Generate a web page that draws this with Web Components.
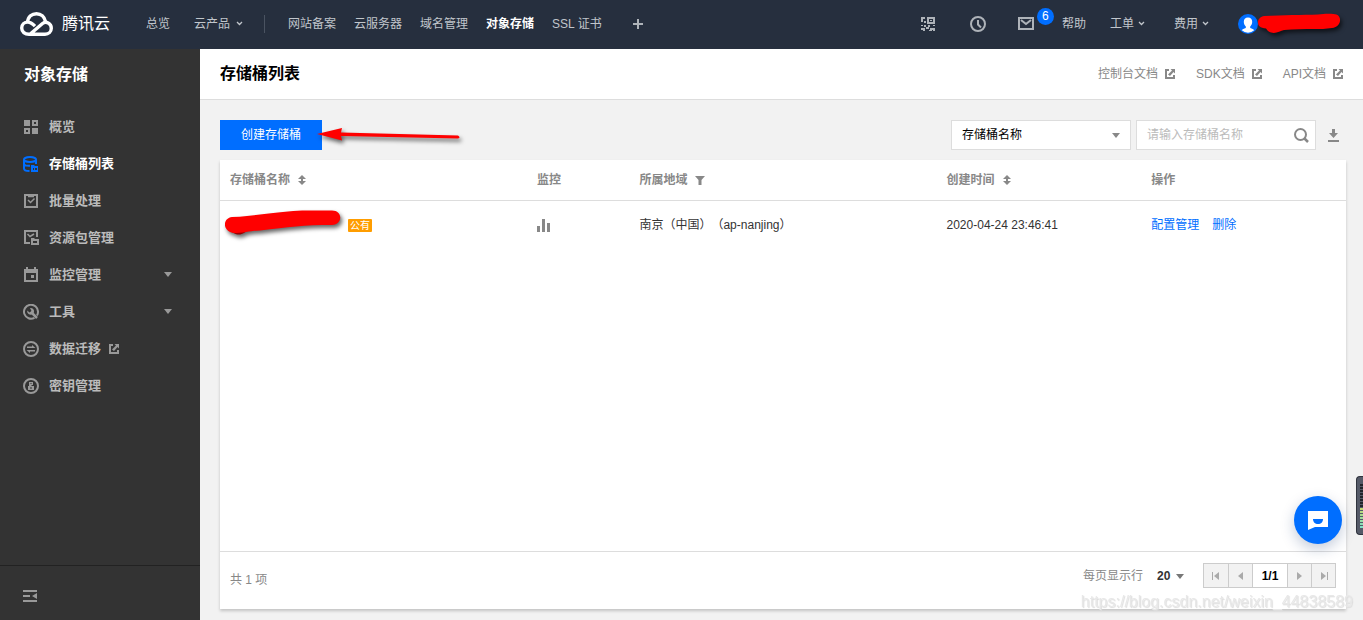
<!DOCTYPE html>
<html lang="zh-CN">
<head>
<meta charset="utf-8">
<title>对象存储 - 存储桶列表</title>
<style>
  html, body { margin: 0; }
  body { font: 12px/18px "Liberation Sans", "Noto Sans CJK SC", sans-serif; color: #333; background: #f2f2f2; text-spacing-trim: space-all; }
</style>
</head>
<body>
<console-app></console-app>

<script>
/* ---- icons: [width, height, markup] ---- */
const ICONS = {
  logo: [34, 26, '<g fill="none" stroke="#fff" stroke-width="3.400"><path d="M7.500 11.500C8 5.500 12 2.700 16.500 2.700c4.500 0 8 3 9 7.800"/><path d="M10 23.300 22.500 12.500C26 9.800 31.300 12.300 31.300 17.300c0 3.500-2.800 6-6.300 6H9c-4.200 0-7.300-2.500-7.300-6.200 0-3.500 2.800-6 6-6 2.800 0 4.800 1.500 7.300 4"/></g>'],
  chevron: [7, 5, '<path d="M1 1l2.500 2.500L6 1" fill="none" stroke="currentColor" stroke-width="1.300"/>'],
  plus: [10, 10, '<path d="M5 0v10M0 5h10" stroke="currentColor" stroke-width="2"/>'],
  qr: [14, 14, '<path fill="currentColor" fill-rule="evenodd" d="M0 0h4v2H2v3H0zM6 0h8v7H6zm2 2v3h4V2zM9 3h2v1H9zM3 4h2v2H3zM0 8h2v1H0zM3 8h2v2H3zM7 8h2v2H7zM12 8h2v1h-2zM0 11h4v3H2v-1H0zM5 10h3v2H5zM9 11h5v3h-2v-1h-1v1H8v-1h1z"/>'],
  clock: [16, 16, '<g fill="none" stroke="currentColor" stroke-width="2"><circle cx="8" cy="8" r="7"/><path d="M8 4v4.500l3 3"/></g>'],
  mail: [16, 13, '<g fill="none" stroke="currentColor" stroke-width="2"><path d="M1 1h14v11H1z"/><path d="M3 3l5 4 5-4"/></g>'],
  avatar: [20, 20, '<circle cx="10" cy="10" r="10" fill="#006eff"/><path fill="#fff" d="M10 3.500c2.800 0 4.200 1.800 4.200 4.300 0 2-.8 3.700-2 4.700v1.500c2 .6 3.300 1.200 4 2.300a9 9 0 0 1-12.400 0c.7-1.100 2-1.700 4-2.300v-1.500c-1.200-1-2-2.700-2-4.700 0-2.500 1.400-4.300 4.200-4.300z"/>'],
  external: [10, 10, '<path fill="currentColor" d="M0 0h4v2H2v6h6V6h2v4H0zM5.500 0H10v4.500L8.500 3 5 7 3 5.500 7 1.500z"/>'],
  overview: [14, 14, '<path fill="currentColor" d="M0 0h6v6H0zM8 0h6v6H8zm2 2v2h2V2zM0 8h6v6H0zm2 2v2h2v-2zM8 8h6v6H8z" fill-rule="evenodd"/>'],
  bucket: [16, 16, '<g fill="none" stroke="currentColor" stroke-width="2"><ellipse cx="7" cy="3.500" rx="6" ry="2.500"/><path d="M1 3.500v9c0 1.500 2 2.500 5.500 2.500M13 3.500V8M1 8c.5 1.500 3 2 6 1.800"/></g><path fill="currentColor" fill-rule="evenodd" d="M8 9h3l1 1h3v6H8zm2 3v2h1v-2zm2 0v2h2v-2z"/>'],
  batch: [14, 14, '<path d="M1 1h12v12H1z" fill="none" stroke="currentColor" stroke-width="2"/><path d="M4 6 6.500 8.500 10.500 4.500M4 2.500h6" fill="none" stroke="currentColor" stroke-width="1.500"/>'],
  pack: [15, 15, '<path d="M6 13H1V1h12v6" fill="none" stroke="currentColor" stroke-width="2"/><path d="M3.500 4 6 6.500 10 4" fill="none" stroke="currentColor" stroke-width="1.500"/><path fill="currentColor" fill-rule="evenodd" d="M7 8h3l1 1h4v6H7zm2 3v2h4v-2z"/>'],
  calendar: [14, 15, '<path fill="currentColor" fill-rule="evenodd" d="M2 0h2v2h6V0h2v2h2v13H0V2h2zm0 6v7h10V6zM7 8h3v3H7z"/>'],
  tool: [16, 16, '<path d="M11.500 13.800A7 7 0 1 1 15 8c0 1.500-.4 2.500-1 3.500" fill="none" stroke="currentColor" stroke-width="2"/><path d="M8 8l6 6" stroke="currentColor" stroke-width="2.500"/><path fill="currentColor" d="M7 4c2-.5 4.500 1 4 4-.3 2-3 3.300-5 2.300C4.500 9.500 4 8 4.300 6.500L6.500 8.500 8.500 7z"/>'],
  migrate: [16, 16, '<circle cx="8" cy="8" r="7" fill="none" stroke="currentColor" stroke-width="2"/><path fill="currentColor" d="M4 5.500h5V4l3.500 3H4zM12 10.500H7V12L3.500 9H12z"/>'],
  key: [16, 16, '<circle cx="8" cy="8" r="7" fill="none" stroke="currentColor" stroke-width="2"/><path fill="currentColor" fill-rule="evenodd" d="M6 4h4v3H8.500v1H11v4H5V8h1zm1.500 1v1h1V5zM7.500 9v2h1V9z"/>'],
  caret: [8, 5, '<path fill="currentColor" d="M0 0h8L4 5z"/>'],
  collapse: [14, 12, '<path fill="currentColor" d="M0 0h14v2H0zM0 5h7v2H0zM0 10h14v2H0zM14 3v6L9 6z"/>'],
  sort: [8, 10, '<path fill="currentColor" d="M4 0l4 4H5v2h3l-4 4-4-4h3V4H0z"/>'],
  filter: [10, 9, '<path fill="currentColor" d="M0 0h10L6.500 4v5h-3V4z"/>'],
  bars: [13, 13, '<path fill="currentColor" d="M0 7h3v6H0zM5 0h3v13H5zM10 4h3v9h-3z"/>'],
  search: [15, 15, '<circle cx="6.500" cy="6.500" r="5.500" fill="none" stroke="currentColor" stroke-width="2"/><path d="M10 10l4 4" stroke="currentColor" stroke-width="2.500"/>'],
  download: [11, 13, '<path fill="currentColor" d="M4 0h3v4h3L5.500 9 1 4h3zM0 11h11v2H0z"/>'],
  first: [8, 8, '<path fill="currentColor" d="M0 0h1v8H0zM7 0v8L2 4z"/>'],
  prev: [5, 8, '<path fill="currentColor" d="M5 0v8L0 4z"/>'],
  next: [5, 8, '<path fill="currentColor" d="M0 0v8l5-4z"/>'],
  last: [8, 8, '<path fill="currentColor" d="M7 0h1v8H7zM1 0v8l5-4z"/>'],
  chat: [20, 19, '<path fill="#fff" d="M0 0h20v16H7l-7 3z"/><path fill="#006eff" d="M5 8h10c0 3-2 5-5 5S5 11 5 8z"/>'],
  inkUser: [86, 26, '<path d="M6 5C25 4 45 4 60 3.500c6-1 12-1 15.500-.5C85 3 84 16 74 17c-6 1-12 1-18 1-10 0-20 0-30 1-4 1-8 4-13 2.500-3-.5-4-3-5-4C2 17 0 15 0 11c0-3 3-5.500 6-6z" fill="#f00"/>'],
  inkName: [120, 34, '<path d="M4 18c2 11 16 11 19 2z" fill="#900"/><path d="M7 9c24-1 40-5 70-6.500h30c11 0 11 14 0 14.500-28 0-44 2-72 5.500-8 0-14 2-24 2.500C-3 25-3 10 7 9z" fill="#f00"/>'],
  inkArrow: [146, 16, '<path d="M0 7 25 1l-1 4.500 117 3q3 2 0 3L24 9l1 4.500z" fill="#f00"/>']
};

const define = (name, css, html) => {
  customElements.define(name, class extends HTMLElement {
    connectedCallback() {
      if (this.shadowRoot) return;
      const t = document.createElement('template');
      t.innerHTML = '<style>*{box-sizing:border-box}:host{box-sizing:border-box}' + css + '</style>' +
        (typeof html === 'function' ? html(this) : html);
      this.attachShadow({ mode: 'open' }).append(t.content.cloneNode(true));
    }
  });
};

define('ui-icon', ':host{display:inline-flex;flex:none}svg{display:block}', el => {
  const [w, h, body] = ICONS[el.getAttribute('name')];
  return `<svg width="${w}" height="${h}" viewBox="0 0 ${w} ${h}" aria-hidden="true">${body}</svg>`;
});

define('ink-mark', ':host{display:inline-flex;flex:none;filter:drop-shadow(2px 3px 2px rgba(0,0,0,.6))}',
  el => `<ui-icon name="${el.getAttribute('shape')}"></ui-icon>`);

/* ---- top bar ---- */
define('top-link', `
  :host{display:block}
  a{display:flex;align-items:center;gap:var(--gap,6px);color:#c1c6cc;text-decoration:none;white-space:nowrap}
  :host([active]) a{color:#fff;font-weight:bold}`,
  el => `<a href="#"><slot></slot>${el.hasAttribute('menu') ? '<ui-icon name="chevron"></ui-icon>' : ''}</a>`);

define('top-bar', `
  :host{display:flex;align-items:center;height:49px;padding:0 20px 2px;background:#262f3e;color:#c1c6cc}
  .brand{display:flex;align-items:center;gap:8px;color:#fff;font-size:16px;line-height:24px;text-decoration:none;margin-right:36px}
  nav{display:flex;align-items:center;gap:18px}
  .main{gap:24px;padding-right:21px;margin-right:23px;border-right:1px solid #4a5361}
  button{display:flex;padding:0;border:0;background:none;color:#aeb3b9}
  .add{margin-left:31px}
  .tools{display:flex;align-items:center;margin-left:auto}
  .tools .ic{margin-right:35px}
  .tools .clock{margin-right:32px}
  .tools .mail{position:relative;margin-right:28px}
  .badge{position:absolute;left:19px;top:-9px;width:17px;height:17px;border-radius:9px;background:#006eff;color:#fff;font-size:12px;line-height:17px;text-align:center}
  .links{gap:24px;--gap:4px}
  .links :last-child{margin-left:5px}
  .user{display:flex;align-items:center;margin-left:29px}
  .user ink-mark{margin-right:-1px}`, `
  <a class="brand" href="#"><ui-icon name="logo"></ui-icon>腾讯云</a>
  <nav class="main"><top-link>总览</top-link><top-link menu>云产品</top-link></nav>
  <nav><top-link>网站备案</top-link><top-link>云服务器</top-link><top-link>域名管理</top-link><top-link active>对象存储</top-link><top-link>SSL 证书</top-link></nav>
  <button class="add" aria-label="添加"><ui-icon name="plus"></ui-icon></button>
  <div class="tools">
    <button class="ic" aria-label="二维码"><ui-icon name="qr"></ui-icon></button>
    <button class="clock" aria-label="最近"><ui-icon name="clock"></ui-icon></button>
    <button class="mail" aria-label="消息"><ui-icon name="mail"></ui-icon><span class="badge">6</span></button>
    <nav class="links"><top-link>帮助</top-link><top-link menu>工单</top-link><top-link menu>费用</top-link></nav>
    <div class="user"><ui-icon name="avatar"></ui-icon><ink-mark shape="inkUser"></ink-mark></div>
  </div>`);

/* ---- side navigation ---- */
define('side-item', `
  :host{display:block}
  a{display:flex;align-items:center;height:37px;padding:0 28px 0 23px;color:#bbb;font-size:13px;font-weight:bold;text-decoration:none}
  .icon{display:flex;width:16px;justify-content:center;margin-right:10px;color:#999}
  .ext{margin-left:8px;color:#999}
  .more{margin-left:auto;color:#999}
  :host([active]) a{color:#fff}
  :host([active]) .icon{color:#006eff}`,
  el => `<a href="#"><span class="icon"><ui-icon name="${el.getAttribute('icon')}"></ui-icon></span><slot></slot>` +
    (el.hasAttribute('external') ? '<ui-icon class="ext" name="external"></ui-icon>' : '') +
    (el.hasAttribute('expandable') ? '<ui-icon class="more" name="caret"></ui-icon>' : '') + '</a>');

define('side-nav', `
  :host{display:flex;flex-direction:column;width:200px;flex:none;background:#333}
  h2{margin:0;padding:14px 24px 21px;color:#fff;font-size:16px;line-height:24px}
  nav{flex:1}
  footer{display:flex;height:55px;padding:24px 23px 0;border-top:1px solid #222}
  button{display:flex;align-self:flex-start;padding:0;border:0;background:none;color:#999}`, `
  <h2>对象存储</h2>
  <nav>
    <side-item icon="overview">概览</side-item>
    <side-item icon="bucket" active>存储桶列表</side-item>
    <side-item icon="batch">批量处理</side-item>
    <side-item icon="pack">资源包管理</side-item>
    <side-item icon="calendar" expandable>监控管理</side-item>
    <side-item icon="tool" expandable>工具</side-item>
    <side-item icon="migrate" external>数据迁移</side-item>
    <side-item icon="key">密钥管理</side-item>
  </nav>
  <footer><button aria-label="收起菜单"><ui-icon name="collapse"></ui-icon></button></footer>`);

/* ---- page header ---- */
define('doc-link', `:host{display:block}a{display:flex;align-items:center;gap:7px;color:#888;text-decoration:none}`,
  '<a href="#"><slot></slot><ui-icon name="external"></ui-icon></a>');

define('page-header', `
  :host{display:flex;align-items:center;height:51px;padding:0 20px;background:#fff;border-bottom:1px solid #ddd}
  h1{margin:0;font-size:16px;line-height:24px;color:#000}
  nav{display:flex;gap:21px;margin-left:auto}`, `
  <h1>存储桶列表</h1>
  <nav><doc-link>控制台文档</doc-link><doc-link>SDK文档</doc-link><doc-link>API文档</doc-link></nav>`);

/* ---- toolbar ---- */
define('bucket-toolbar', `
  :host{display:flex;align-items:center;height:30px;padding-right:7px}
  .create{position:relative}
  .create button{display:block;width:102px;height:30px;padding:0;border:0;background:#006eff;color:#fff;font:inherit}
  ink-mark{position:absolute;left:97px;top:7px;z-index:1}
  .field{position:relative;display:flex;width:180px;height:30px;border:1px solid #ddd;background:#fff}
  .type{margin-left:auto;margin-right:5px}
  select,input{appearance:none;width:100%;height:28px;padding:0 30px 0 10px;border:0;border-radius:0;outline:0;background:none;font:inherit;color:#000}
  input::placeholder{color:#bbb;opacity:1}
  .field ui-icon{position:absolute;right:10px;top:12px;color:#888;pointer-events:none}
  .field button{position:absolute;right:6px;top:7px;display:flex;padding:0;border:0;background:none;color:#888}
  .field button ui-icon{position:static}
  .dl{display:flex;margin-left:12px;padding:0;border:0;background:none;color:#888}`, `
  <div class="create"><button>创建存储桶</button><ink-mark shape="inkArrow"></ink-mark></div>
  <div class="field type"><select aria-label="搜索类型"><option>存储桶名称</option></select><ui-icon name="caret"></ui-icon></div>
  <div class="field"><input aria-label="搜索" placeholder="请输入存储桶名称"><button aria-label="搜索"><ui-icon name="search"></ui-icon></button></div>
  <button class="dl" aria-label="下载"><ui-icon name="download"></ui-icon></button>`);

/* ---- table ---- */
define('bucket-table', `
  :host{display:block}
  table{width:100%;table-layout:fixed;border-collapse:separate;border-spacing:0}
  .w3{width:calc(100% * 3 / 11)}.w2{width:calc(100% * 2 / 11)}.w1{width:calc(100% / 11)}
  th,td{padding:0 10px;text-align:left;white-space:nowrap}
  th{height:41px;border-bottom:1px solid #ddd;color:#888}
  td{height:48px}
  .line{display:flex;align-items:center;gap:8px}
  .name{margin:0 -5px;gap:3px}
  ui-icon{color:#888}
  .tag{padding:0 2px;border-radius:1px;background:#ff9d00;color:#fff;font-size:10px;line-height:13px}
  .ops{gap:13px}
  a{color:#006eff;text-decoration:none}`, `
  <table>
    <colgroup><col class="w3"><col class="w1"><col class="w3"><col class="w2"><col class="w2"></colgroup>
    <thead><tr>
      <th scope="col"><div class="line">存储桶名称<ui-icon name="sort"></ui-icon></div></th>
      <th scope="col">监控</th>
      <th scope="col"><div class="line">所属地域<ui-icon name="filter"></ui-icon></div></th>
      <th scope="col"><div class="line">创建时间<ui-icon name="sort"></ui-icon></div></th>
      <th scope="col">操作</th>
    </tr></thead>
    <tbody><tr>
      <td><div class="line name"><ink-mark shape="inkName"></ink-mark><span class="tag">公有</span></div></td>
      <td><div class="line"><ui-icon name="bars"></ui-icon></div></td>
      <td>南京（中国）（ap-nanjing）</td>
      <td>2020-04-24 23:46:41</td>
      <td><div class="line ops"><a href="#">配置管理</a><a href="#">删除</a></div></td>
    </tr></tbody>
  </table>`);

define('table-pager', `
  :host{display:flex;align-items:flex-start;height:58px;padding:11px 10px 0;border-top:1px solid #ddd;color:#888}
  .total{padding-top:8px}
  label{display:flex;align-items:center;height:26px;margin-left:auto}
  .size{position:relative;display:flex;margin:0 19px 0 14px}
  select{appearance:none;width:27px;padding:0;border:0;background:none;color:#333;font:inherit;font-weight:bold}
  .size ui-icon{position:absolute;right:0;top:7px;pointer-events:none;color:#777}
  .pages{display:flex;height:25px;border:1px solid #ccc;color:#000;font-weight:bold;line-height:24px}
  .pages button{display:flex;align-items:center;justify-content:center;width:24px;padding:0;border:0;background:#f2f2f2;color:#aaa}
  .pages > * + *{border-left:1px solid #ccc !important}
  .pages span{width:35px;text-align:center}`, `
  <span class="total">共 1 项</span>
  <label>每页显示行<span class="size"><select><option>20</option></select><ui-icon name="caret"></ui-icon></span></label>
  <div class="pages">
    <button disabled aria-label="首页"><ui-icon name="first"></ui-icon></button>
    <button disabled aria-label="上一页"><ui-icon name="prev"></ui-icon></button>
    <span>1/1</span>
    <button disabled aria-label="下一页"><ui-icon name="next"></ui-icon></button>
    <button disabled aria-label="末页"><ui-icon name="last"></ui-icon></button>
  </div>`);

define('data-card', `
  :host{display:flex;flex-direction:column;background:#fff;box-shadow:0 2px 3px rgba(0,0,0,.2)}
  .body{flex:1}`, '<div class="body"><slot></slot></div><slot name="footer"></slot>');

/* ---- floating pieces ---- */
define('chat-button', `
  :host{position:fixed;right:21px;bottom:76px;z-index:2}
  button{display:flex;align-items:center;justify-content:center;width:48px;height:48px;padding:0;border:0;border-radius:50%;background:#006eff;box-shadow:0 5px 14px rgba(20,50,110,.25)}`,
  '<button aria-label="在线咨询"><ui-icon name="chat"></ui-icon></button>');

define('level-meter', `
  :host{position:fixed;right:0;bottom:85px;z-index:2;width:7px;height:59px;padding:7px 0 6px 3px;border:1px solid #2f333d;border-right:0;border-radius:4px 0 0 4px;background:#555a68}
  div{height:100%;background:repeating-linear-gradient(transparent 0 2px,#555a68 2px 3px),linear-gradient(#22252c 52%,#c8d86a 52%,#7fe0c8)}`,
  '<div></div>');

define('page-mark', `
  :host{position:fixed;right:10px;bottom:8px;z-index:1;font-size:16px;line-height:20px;color:#e8e8e8;text-shadow:1px 1px 1px #ddd;pointer-events:none}`,
  'https://blog.csdn.net/weixin_44838589');

define('console-app', `
  :host{display:flex;flex-direction:column;min-height:100vh}
  .row{display:flex;flex:1}
  main{display:flex;flex-direction:column;flex:1;min-width:0}
  .content{display:flex;flex-direction:column;flex:1;gap:10px;padding:20px 17px 11px 20px}
  data-card{flex:1}`, `
  <top-bar></top-bar>
  <div class="row">
    <side-nav></side-nav>
    <main>
      <page-header></page-header>
      <div class="content">
        <bucket-toolbar></bucket-toolbar>
        <data-card><bucket-table></bucket-table><table-pager slot="footer"></table-pager></data-card>
      </div>
    </main>
  </div>
  <chat-button></chat-button>
  <level-meter></level-meter>
  <page-mark></page-mark>`);
</script>
</body>
</html>
